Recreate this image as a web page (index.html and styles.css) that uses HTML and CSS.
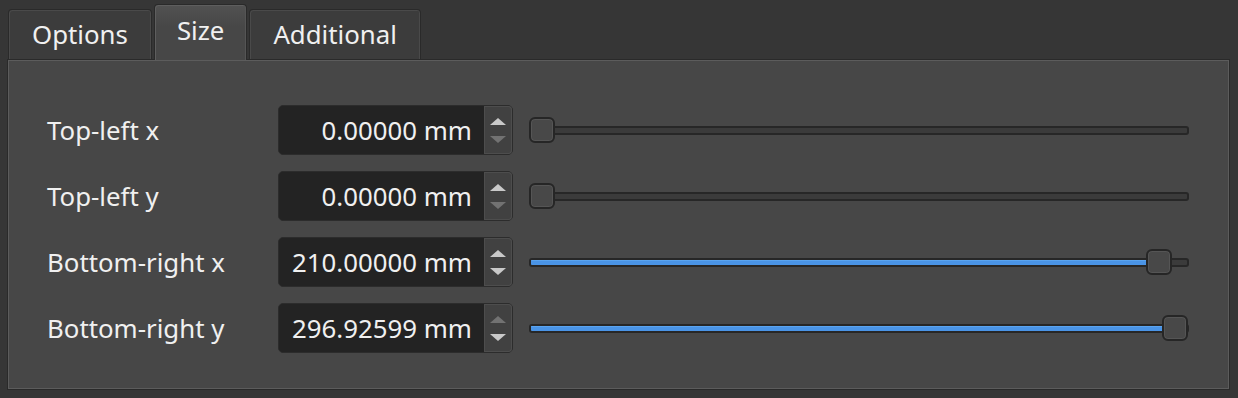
FILE: index.html
```html
<!DOCTYPE html>
<html lang="en">
<head>
    <meta charset="UTF-8">
    <title>Page Size</title>
    <link rel="stylesheet" href="styles.css">
</head>
<body>
    <div class="tabs">
        <div class="tab">Options</div>
        <div class="tab active">Size</div>
        <div class="tab">Additional</div>
    </div>
    <div class="panel">
        <div class="row">
            <span class="label">Top-left x</span>
            <div class="spin">
                <span class="value">0.00000 mm</span>
                <div class="buttons"><i class="up"></i><i class="down off"></i></div>
            </div>
            <div class="slider">
                <div class="groove"></div>
                <div class="handle" style="left: 0px"></div>
            </div>
        </div>
        <div class="row">
            <span class="label">Top-left y</span>
            <div class="spin">
                <span class="value">0.00000 mm</span>
                <div class="buttons"><i class="up"></i><i class="down off"></i></div>
            </div>
            <div class="slider">
                <div class="groove"></div>
                <div class="handle" style="left: 0px"></div>
            </div>
        </div>
        <div class="row">
            <span class="label">Bottom-right x</span>
            <div class="spin">
                <span class="value">210.00000 mm</span>
                <div class="buttons"><i class="up"></i><i class="down"></i></div>
            </div>
            <div class="slider">
                <div class="groove"><div class="fill" style="width: 620px"></div></div>
                <div class="handle" style="left: 617px"></div>
            </div>
        </div>
        <div class="row">
            <span class="label">Bottom-right y</span>
            <div class="spin">
                <span class="value">296.92599 mm</span>
                <div class="buttons"><i class="up off"></i><i class="down"></i></div>
            </div>
            <div class="slider">
                <div class="groove"><div class="fill" style="width: 640px"></div></div>
                <div class="handle" style="left: 633px"></div>
            </div>
        </div>
    </div>
</body>
</html>
```

FILE: styles.css
```css
body {
    margin: 0;
    padding: 4px 8px 0 7px;
    background: #363636;
    color: #f0f0f0;
    font-family: "Noto Sans", "Open Sans", sans-serif;
    font-size: 25.8px;
    height: 394px;
}

/* Tab bar */
.tabs {
    display: flex;
    align-items: flex-end;
    gap: 2px;
    padding-left: 1px;
    height: 55px;
}

.tab {
    display: flex;
    align-items: center;
    padding: 0 23px 1px;
    box-sizing: border-box;
    height: 50px;
    background: #3c3c3c;
    border: 1px solid #2a2a2a;
    border-bottom: none;
    border-radius: 4px 4px 0 0;
    box-shadow: inset 1px 1px 0 #4a4a4a, inset -1px 0 0 #4a4a4a;
}

.tab.active {
    height: 56px;
    margin-bottom: -1px;
    padding: 0 22px 5px;
    background: linear-gradient(#525252, #474747 40%);
    box-shadow: inset 1px 1px 0 #5e5e5e, inset -1px 0 0 #555;
    position: relative;
    z-index: 1;
}

/* Page panel */
.panel {
    height: 331px;
    box-sizing: border-box;
    background: #474747;
    border: 1px solid #2a2a2a;
    box-shadow: inset 0 0 0 1px #5c5c5c;
    padding: 45px 38px 0 39px;
    display: flex;
    flex-direction: column;
    gap: 16px;
}

.row {
    display: grid;
    grid-template-columns: 231px 235px 1fr;
    gap: 16px;
    align-items: center;
    height: 50px;
}

.row .label {
    margin-right: -16px;
    margin-top: -1px;
}

/* Spin box */
.spin {
    height: 50px;
    box-sizing: border-box;
    display: flex;
    background: #232323;
    border: 1px solid #2c2c2c;
    border-radius: 5px;
    margin-left: -16px;
    width: 235px;
}

.spin .value {
    flex: 1;
    text-align: right;
    align-self: center;
    padding-right: 12px;
}

.buttons {
    width: 28px;
    display: flex;
    flex-direction: column;
    align-items: center;
    justify-content: center;
    gap: 11px;
    background: #414141;
    border-radius: 0 4px 4px 0;
    box-shadow: inset 0 0 0 1px #4d4d4d;
}

.buttons i {
    width: 0;
    height: 0;
    border-left: 8px solid transparent;
    border-right: 8px solid transparent;
}

.buttons .up { border-bottom: 7px solid #c9c9c9; }
.buttons .down { border-top: 7px solid #c9c9c9; }
.buttons .up.off { border-bottom-color: #727272; }
.buttons .down.off { border-top-color: #727272; }

/* Slider */
.slider {
    position: relative;
    height: 26px;
    display: flex;
    align-items: center;
    margin-left: -16px;
    margin-right: 2px;
}

.groove {
    flex: 1;
    height: 9px;
    box-sizing: border-box;
    background: #3b3b3b;
    border: 2px solid #272727;
    border-radius: 3px;
    overflow: hidden;
}

.fill {
    height: 100%;
    background: #4a94e6;
    box-shadow: inset 0 1px 0 #5aa4f0;
}

.handle {
    position: absolute;
    top: 0;
    width: 26px;
    height: 26px;
    box-sizing: border-box;
    background: #484848;
    border: 2px solid #262626;
    border-radius: 6px;
    box-shadow: inset 0 0 0 1px #555;
}
```
